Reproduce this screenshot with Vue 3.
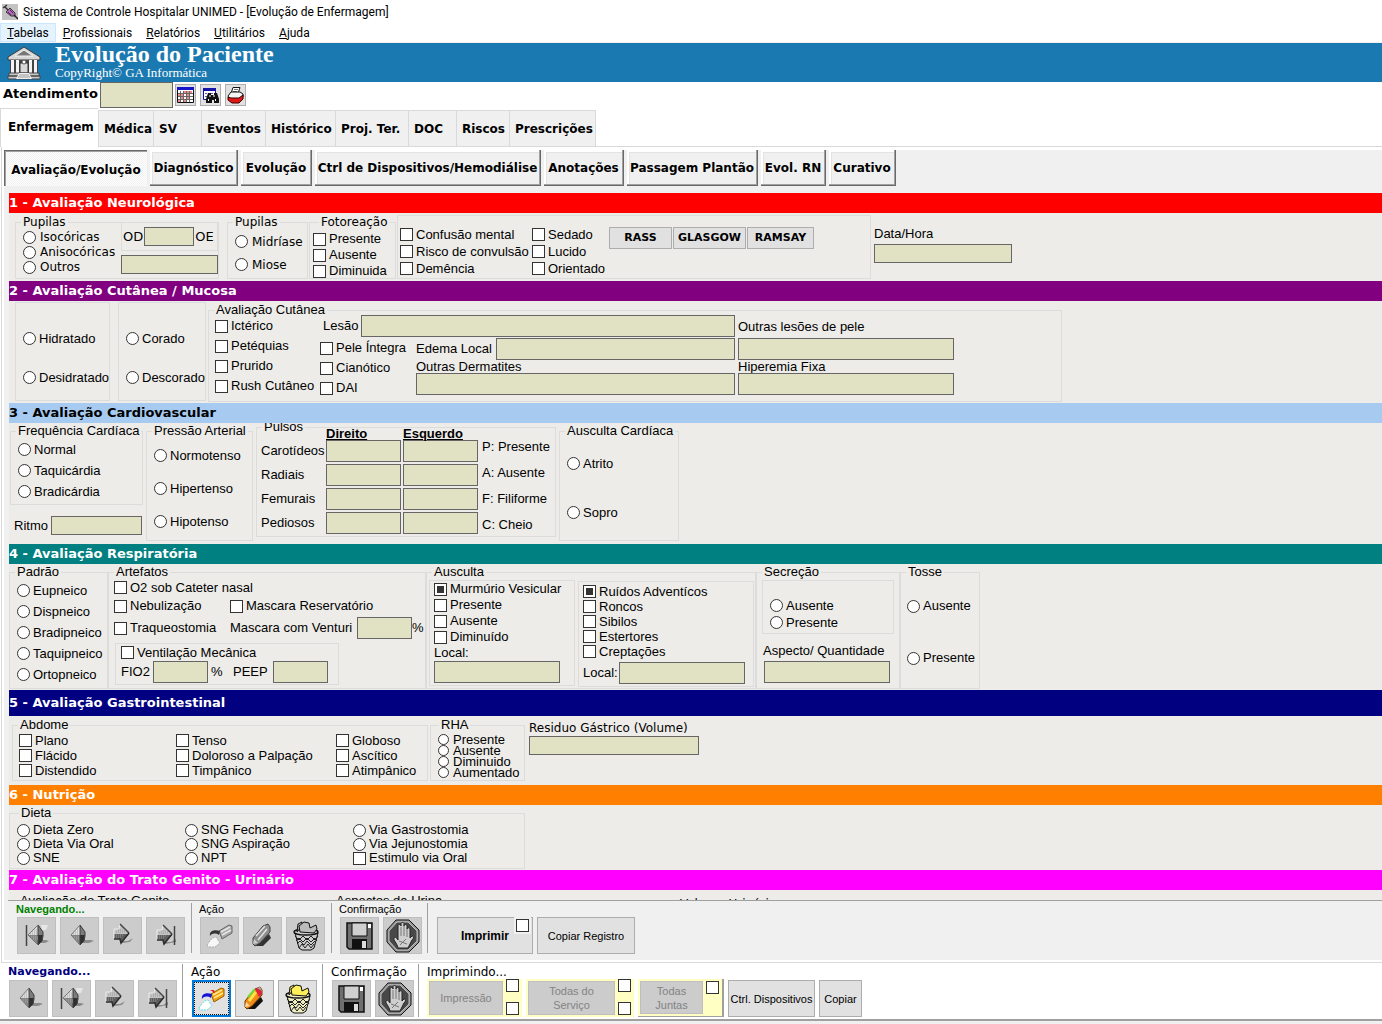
<script setup>
const menus = [
  { key: 'T', rest: 'abelas', active: true },
  { key: 'P', rest: 'rofissionais' },
  { key: 'R', rest: 'elatórios' },
  { key: 'U', rest: 'tilitários' },
  { key: 'A', rest: 'juda' },
]
const tabs = [
  { name: 'Enfermagem', w: 98, on: true },
  { name: 'Médica', w: 55 },
  { name: 'SV', w: 48 },
  { name: 'Eventos', w: 64 },
  { name: 'Histórico', w: 70 },
  { name: 'Proj. Ter.', w: 73 },
  { name: 'DOC', w: 48 },
  { name: 'Riscos', w: 53 },
  { name: 'Prescrições', w: 87 },
]
const pages = [
  { name: 'Avaliação/Evolução', w: 143, on: true },
  { name: 'Diagnóstico', w: 88 },
  { name: 'Evolução', w: 71 },
  { name: 'Ctrl de Dispositivos/Hemodiálise', w: 226 },
  { name: 'Anotações', w: 80 },
  { name: 'Passagem Plantão', w: 131 },
  { name: 'Evol. RN', w: 65 },
  { name: 'Curativo', w: 67 },
]
const pulses = ['Carotídeos', 'Radiais', 'Femurais', 'Pediosos']
const pulseKeys = ['P: Presente', 'A: Ausente', 'F: Filiforme', 'C: Cheio']
const abdomen = [
  ['Plano', 'Flácido', 'Distendido'],
  ['Tenso', 'Doloroso a Palpação', 'Timpânico'],
  ['Globoso', 'Ascítico', 'Atimpânico'],
]
const diet = [
  [['Dieta Zero', 'radio'], ['Dieta Via Oral', 'radio'], ['SNE', 'radio']],
  [['SNG Fechada', 'radio'], ['SNG Aspiração', 'radio'], ['NPT', 'radio']],
  [['Via Gastrostomia', 'radio'], ['Via Jejunostomia', 'radio'], ['Estimulo via Oral', 'checkbox']],
]
</script>

<template>
  <div class="app">
    <svg class="defs" aria-hidden="true">
      <symbol id="i-prev" viewBox="0 0 39 37">
        <path d="M21 26h8l5-2-3-1h-7z" fill="#8b8b8b" />
        <path d="M11 18 20 8v10z" fill="#dcdcdc" /><path d="M11 18h9v10z" fill="#858585" />
        <path d="M20 8l5 7v3h-5z" fill="#7c7c7c" /><path d="M20 18h5l-1 6-4 4z" fill="#303030" />
        <path d="M20 8l5 7v4l-1 5-4 4z" fill="none" stroke="#3c3c3c" />
        <path d="M11 18 20 8M11 18l9 10" stroke="#777" />
        <path d="M13 17h7M15 15h5M17 13h3M14 20h6M16 22h4" stroke="#aaa" stroke-dasharray="1 1" />
      </symbol>
      <symbol id="i-first" viewBox="0 0 39 37">
        <path d="M9.500 8v21" stroke="#444" stroke-width="1.500" />
        <path d="M24 8h7l-2 5h-4z" fill="#e6e6e6" />
        <path d="M21 26h7l4-2-3-1h-6z" fill="#8b8b8b" />
        <path d="M11 18 21 8v10z" fill="#dcdcdc" /><path d="M11 18h10v10z" fill="#858585" />
        <path d="M21 8l5 7v3h-5z" fill="#7c7c7c" /><path d="M21 18h5l-1 6-4 4z" fill="#303030" />
        <path d="M21 8l5 7v4l-1 5-4 4z" fill="none" stroke="#3c3c3c" />
        <path d="M11 18 21 8M11 18l10 10" stroke="#777" />
        <path d="M13 17h8M15 15h6M17 13h4M14 20h7M16 22h5" stroke="#aaa" stroke-dasharray="1 1" />
      </symbol>
      <symbol id="i-next" viewBox="0 0 39 37">
        <path d="M18 24h7l5-3-3 4-8 1z" fill="#8b8b8b" />
        <path d="M11 12l6-1 1-4 9 9-10 1H11z" fill="#c3c3c3" />
        <path d="M11 17h15l-8 9-1-4-6-1z" fill="#5e5e5e" />
        <path d="M11 12v9M11 12h5M16 12l1-5" fill="none" stroke="#eee" />
        <path d="M17 7l9 9" stroke="#444" stroke-width="1.500" />
        <path d="M26 16 18 26l-1-4h-6" fill="none" stroke="#2c2c2c" stroke-width="1.500" />
        <path d="M13 15h11M15 13h7M13 18h8M13 20h6" stroke="#999" stroke-dasharray="1 1" />
      </symbol>
      <symbol id="i-last" viewBox="0 0 39 37">
        <path d="M18 25h7l5-3v3l-11 2z" fill="#8b8b8b" />
        <path d="M28.500 9v19" stroke="#444" stroke-width="1.500" />
        <path d="M11 13l6-1 1-4 9 9-10 1H11z" fill="#c3c3c3" />
        <path d="M11 18h15l-8 9-1-4-6-1z" fill="#5e5e5e" />
        <path d="M11 13v9M11 13h5M16 13l1-5" fill="none" stroke="#eee" />
        <path d="M17 8l9 9" stroke="#444" stroke-width="1.500" />
        <path d="M26 17 18 27l-1-4h-6" fill="none" stroke="#2c2c2c" stroke-width="1.500" />
        <path d="M13 16h11M15 14h7M13 19h8M13 21h6" stroke="#999" stroke-dasharray="1 1" />
      </symbol>
      <symbol id="i-pour-off" viewBox="0 0 39 37">
        <path d="M19 14 29 8l3 1v7l-10 6z" fill="#a9a9a9" stroke="#666" />
        <path d="M21 15 30 10M22 18l9-5" stroke="#e6e6e6" stroke-width="1.500" />
        <path d="M10 19c-1-5 4-7 10-5l-1 4c-3-2-7-2-9 1z" fill="#333" />
        <path d="M7 28c2-3 5-8 9-8l4 6-5 4H8z" fill="#f7f7f7" stroke="#aaa" stroke-dasharray="2 1" />
      </symbol>
      <symbol id="i-pour-on" viewBox="0 0 39 37">
        <path d="M19 14 29 8l3 1v7l-10 6z" fill="#f0a010" stroke="#9a6400" />
        <path d="M21 15 30 10M22 18l9-5" stroke="#ffe98a" stroke-width="1.500" />
        <path d="M18 10h4l1 3z" fill="#e02020" />
        <path d="M10 19c-1-5 4-7 10-5l-1 4c-3-2-7-2-9 1z" fill="#1414d8" />
        <path d="M7 28c2-3 5-8 9-8l4 6-5 4H8z" fill="#fff" stroke="#5adde8" stroke-dasharray="2 1" />
      </symbol>
      <symbol id="i-pencil-off" viewBox="0 0 39 37">
        <path d="M11 29h9l8-8-2-4z" fill="#333" />
        <path d="M10 27v-6l10-12 5-2 2 3v5L17 26l-5 3z" fill="#8e8e8e" stroke="#444" />
        <path d="M13 19l9-10M15 23l9-11" stroke="#e2e2e2" stroke-width="1.500" />
        <path d="M10 27l1-5 4 4z" fill="#ccc" />
      </symbol>
      <symbol id="i-pencil-on" viewBox="0 0 39 37">
        <path d="M11 29h9l8-8-2-4z" fill="#111" />
        <path d="M10 27v-6l10-12 5-2 2 3v5L17 26l-5 3z" fill="#f08a18" stroke="#6a3a00" />
        <path d="M13 17l7-8" stroke="#6fdc3a" stroke-width="2" />
        <path d="M14 21l7-9" stroke="#ffe04a" stroke-width="3" />
        <path d="M20 9l5-2 2 7-3 3z" fill="#e02040" /><path d="M22 8l3-1 2 4z" fill="#aaa" />
        <path d="M10 27l1-5 4 4z" fill="#ffd9a0" />
      </symbol>
      <symbol id="i-trash" viewBox="0 0 39 37">
        <path d="M9 16h23l-4 15-3 2h-9l-3-2z" fill="var(--bin)" stroke="#111" />
        <path d="M9 19l4 4 4-4 4 4 4-4 4 4 3-4M10 24l3-3 4 4 4-4 4 4 4-4 2 3M11 27l3-3 4 4 3-4 4 4 4-4M13 31l3-4 3 4 3-4 3 4 3-4" fill="none" stroke="#222" />
        <ellipse cx="20" cy="15" rx="12" ry="3" fill="var(--bin)" stroke="#111" stroke-width="1.500" />
        <path d="M11 15 12 7l4-2v4z" fill="var(--paper)" stroke="#111" />
        <path d="M14 15 13 9l5-4 5 1 1 5 6-3 1 4-3 4z" fill="var(--paper)" stroke="#111" />
      </symbol>
      <symbol id="i-disk" viewBox="0 0 39 37">
        <path d="M7 6h25v26H9l-2-2z" fill="#6f6f6f" stroke="#111" stroke-width="1.500" />
        <path d="M12 6h15v13H12z" fill="#d0d0d0" stroke="#111" />
        <path d="M28 7h3v4h-3z" fill="#fff" />
        <path d="M12 22h15v10H12z" fill="#111" /><path d="M22 24h4v7h-4z" fill="#ddd" />
      </symbol>
      <symbol id="i-stop" viewBox="0 0 39 37">
        <path d="M13 3h13l10 10v12L26 35H13L4 25V13z" fill="#9a9a9a" stroke="#111" />
        <path d="M14 5h11l9 9v10l-9 9H14l-8-9V14z" fill="#484848" stroke="#bbb" />
        <path d="M15 31c-1-5-5-8-4-10 2-2 3 1 4 2V9c0-2 3-2 3 0V7c0-2 3-2 3 0v2c0-2 3-2 3 0v3c1-2 3-1 3 0v9l2-2c2 0 2 2 0 4l-4 8z" fill="#cfcfcf" stroke="#222" />
        <path d="M18 10v9M21 9v10M24 12v8M16 24l8 3M17 28l6-6" stroke="#777" fill="none" />
      </symbol>
    </svg>

    <header class="titlebar">
      <svg width="16" height="16" viewBox="0 0 16 16" aria-hidden="true">
        <path d="M0 0h16v16H0z" fill="#c3c3c3" />
        <path d="M1 4 5 1M3 3l3 3" stroke="#333" stroke-width="1.500" />
        <path d="M4 8l4-4 5 5v3h-4z" fill="#a86bb0" stroke="#3b3b3b" />
        <path d="M6 8l3 3M8 6l3 3" stroke="#702080" /><path d="M12 11l4 4" stroke="#222" stroke-width="1.500" />
      </svg>
      <span>Sistema de Controle Hospitalar UNIMED - [Evolução de Enfermagem]</span>
    </header>

    <nav class="menubar">
      <a v-for="m in menus" :key="m.rest" href="#" :class="{ active: m.active }"><u>{{ m.key }}</u>{{ m.rest }}</a>
    </nav>

    <div class="banner">
      <svg width="34" height="34" viewBox="0 0 34 34" aria-hidden="true">
        <path d="M1 11 17 1l16 10v3H1z" fill="#d6d6d6" stroke="#3a3a3a" />
        <path d="M8 10 17 4l9 6z" fill="#777" stroke="#f4f4f4" />
        <path d="M3 14h28v13H3z" fill="#444" />
        <path d="M5.500 14v13M10.500 14v13M23.500 14v13M28.500 14v13" stroke="#f4f4f4" stroke-width="3" />
        <path d="M13 27V17h8v10z" fill="#d8d8d8" stroke="#333" /><circle cx="17" cy="16" r="2" fill="#fff" stroke="#555" />
        <path d="M2 27h30v3H2zM1 30h32v3H1z" fill="#c9c9c9" stroke="#444" />
        <path d="M12 27h10l3 6H9z" fill="#eee" /><path d="M12 29h10M11 31h12" stroke="#999" />
      </svg>
      <div>
        <h1>Evolução do Paciente</h1>
        <p>CopyRight© GA Informática</p>
      </div>
    </div>

    <div class="lookup">
      <label for="atendimento">Atendimento</label>
      <input id="atendimento" class="f" type="text" />
      <button aria-label="Calendário">
        <svg width="17" height="17" viewBox="0 0 17 17">
          <path d="M.5.5h16v15H.5z" fill="#fff" stroke="#111" /><path d="M0 0h17v3H0z" fill="#1414c8" />
          <path d="M1 6.500h15M1 9.500h15M1 12.500h15M3.500 4v11M6.500 4v11M9.500 4v11M12.500 4v11" stroke="#666" />
          <path d="M7 5h2M10 5h2M13 5h2M1 8h2M4 8h2M10 8h2M4 11h2M10 11h2M1 14h2M7 14h2" stroke="#e01818" />
        </svg>
      </button>
      <button aria-label="Localizar">
        <svg width="17" height="17" viewBox="0 0 17 17">
          <path d="M1.500 1.500h12v11h-12z" fill="#fff" stroke="#1414a8" /><path d="M1 1h13v3H1z" fill="#1414a8" />
          <path d="M3 6.500h8M3 9.500h4" stroke="#5a5ab8" stroke-dasharray="2 1" />
          <path d="M6 6h3v2h3V6h3l2 6v4h-5v-3h-2v3H4v-4z" fill="#111" /><path d="M6.500 12v2M13.500 12v2M8 8v2M12 8v2" stroke="#fff" />
        </svg>
      </button>
      <button aria-label="Imprimir ficha">
        <svg width="17" height="17" viewBox="0 0 17 17">
          <path d="M6 .5h7l-2 6H4z" fill="#fff" stroke="#111" /><path d="M7 2.500h4M6 4.500h4" stroke="#777" />
          <path d="M1 9l3-4h9l3 2v3l-4 3H3z" fill="#f4f4f4" stroke="#111" />
          <path d="M1 10l3 1h8l4-3v4l-4 4H5l-4-3z" fill="#e01818" stroke="#3a0000" />
        </svg>
      </button>
    </div>

    <div class="tabs" role="tablist">
      <button v-for="t in tabs" :key="t.name" role="tab" :class="{ on: t.on }" :style="{ width: t.w + 'px' }">{{ t.name }}</button>
    </div>

    <main class="frame">
      <div class="pages">
        <button v-for="p in pages" :key="p.name" :class="{ on: p.on }" :style="{ width: p.w + 'px' }">{{ p.name }}</button>
      </div>

      <div class="form">
        <h2 class="neuro">1 - Avaliação Neurológica</h2>
        <section class="body s1">
          <fieldset class="pupils">
            <legend>Pupilas</legend>
            <div class="row">
              <div class="opts r15 wide">
                <label v-for="o in ['Isocóricas', 'Anisocóricas', 'Outros']" :key="o"><input type="radio" name="pup" />{{ o }}</label>
              </div>
              <div class="eyes">
                <div class="eyebox"><label for="od">OD</label><input id="od" class="f" /><label for="od">OE</label></div>
                <input class="f" aria-label="Outros" />
              </div>
            </div>
          </fieldset>
          <fieldset class="pupil2">
            <legend>Pupilas</legend>
            <div class="opts r23 wide">
              <label v-for="o in ['Midríase', 'Miose']" :key="o"><input type="radio" name="pup2" />{{ o }}</label>
            </div>
          </fieldset>
          <fieldset class="photo">
            <legend>Fotoreação</legend>
            <div class="opts r16">
              <label v-for="o in ['Presente', 'Ausente', 'Diminuida']" :key="o"><input type="checkbox" />{{ o }}</label>
            </div>
          </fieldset>
          <fieldset class="mental">
            <div class="opts r17">
              <label v-for="o in ['Confusão mental', 'Risco de convulsão', 'Demência']" :key="o"><input type="checkbox" />{{ o }}</label>
            </div>
            <div class="opts r17">
              <label v-for="o in ['Sedado', 'Lucido', 'Orientado']" :key="o"><input type="checkbox" />{{ o }}</label>
            </div>
            <div class="scales"><button>RASS</button><button>GLASGOW</button><button>RAMSAY</button></div>
          </fieldset>
          <div class="date">
            <label for="data">Data/Hora</label>
            <input id="data" class="f" />
          </div>
        </section>

        <h2 class="skin">2 - Avaliação Cutânea / Mucosa</h2>
        <section class="body s2">
          <fieldset class="pair p1">
            <div class="opts r39">
              <label v-for="o in ['Hidratado', 'Desidratado']" :key="o"><input type="radio" name="hid" />{{ o }}</label>
            </div>
          </fieldset>
          <fieldset class="pair p2">
            <div class="opts r39">
              <label v-for="o in ['Corado', 'Descorado']" :key="o"><input type="radio" name="cor" />{{ o }}</label>
            </div>
          </fieldset>
          <fieldset class="cutaneous">
            <legend>Avaliação Cutânea</legend>
            <div class="row up">
              <div class="opts r20 c1">
                <label v-for="o in ['Ictérico', 'Petéquias', 'Prurido', 'Rush Cutâneo']" :key="o"><input type="checkbox" />{{ o }}</label>
              </div>
              <div class="c2">
                <div class="line lesion"><label for="lesao">Lesão</label><input id="lesao" class="f grow" /></div>
                <div class="row">
                  <div class="opts r20 c3">
                    <label v-for="o in ['Pele Íntegra', 'Cianótico', 'DAI']" :key="o"><input type="checkbox" />{{ o }}</label>
                  </div>
                  <div class="stack grow">
                    <div class="line"><label for="edema">Edema Local</label><input id="edema" class="f grow" /></div>
                    <label class="cap" for="derm">Outras Dermatites</label>
                    <input id="derm" class="f" />
                  </div>
                </div>
              </div>
              <div class="stack c4">
                <label class="cap first" for="pele">Outras lesões de pele</label>
                <input id="pele" class="f" />
                <label class="cap" for="hiper">Hiperemia Fixa</label>
                <input id="hiper" class="f" />
              </div>
            </div>
          </fieldset>
        </section>

        <h2 class="cardio">3 - Avaliação Cardiovascular</h2>
        <section class="body s3">
          <div class="freq">
            <fieldset>
              <legend>Frequência Cardíaca</legend>
              <div class="opts r21">
                <label v-for="o in ['Normal', 'Taquicárdia', 'Bradicárdia']" :key="o"><input type="radio" name="freq" />{{ o }}</label>
              </div>
            </fieldset>
            <div class="rhythm"><label for="ritmo">Ritmo</label><input id="ritmo" class="f grow" /></div>
          </div>
          <fieldset class="pressure">
            <legend>Pressão Arterial</legend>
            <div class="opts r33">
              <label v-for="o in ['Normotenso', 'Hipertenso', 'Hipotenso']" :key="o"><input type="radio" name="pa" />{{ o }}</label>
            </div>
          </fieldset>
          <fieldset class="pulse">
            <legend>Pulsos</legend>
            <div class="row">
              <table>
                <thead><tr><th></th><th>Direito</th><th>Esquerdo</th></tr></thead>
                <tbody>
                  <tr v-for="p in pulses" :key="p">
                    <th scope="row">{{ p }}</th>
                    <td><input class="f" :aria-label="p + ' direito'" /></td>
                    <td><input class="f" :aria-label="p + ' esquerdo'" /></td>
                  </tr>
                </tbody>
              </table>
              <ul><li v-for="k in pulseKeys" :key="k">{{ k }}</li></ul>
            </div>
          </fieldset>
          <fieldset class="heart">
            <legend>Ausculta Cardíaca</legend>
            <div class="opts r49">
              <label v-for="o in ['Atrito', 'Sopro']" :key="o"><input type="radio" name="ausc" />{{ o }}</label>
            </div>
          </fieldset>
        </section>

        <h2 class="resp">4 - Avaliação Respiratória</h2>
        <section class="body s4">
          <fieldset class="pattern">
            <legend>Padrão</legend>
            <div class="opts r21">
              <label v-for="o in ['Eupneico', 'Dispneico', 'Bradipneico', 'Taquipneico', 'Ortopneico']" :key="o"><input type="radio" name="pad" />{{ o }}</label>
            </div>
          </fieldset>
          <fieldset class="artefacts">
            <legend>Artefatos</legend>
            <div class="opts r15"><label><input type="checkbox" />O2 sob Cateter nasal</label></div>
            <div class="two opts r22">
              <label><input type="checkbox" />Nebulização</label>
              <label><input type="checkbox" />Mascara Reservatório</label>
              <label><input type="checkbox" />Traqueostomia</label>
              <div class="line venturi"><label for="venturi">Mascara com Venturi</label><input id="venturi" class="f w55" /><span>%</span></div>
            </div>
            <div class="vent">
              <div class="opts r17"><label><input type="checkbox" />Ventilação Mecânica</label></div>
              <div class="line">
                <label class="fio" for="fio2">FIO2</label><input id="fio2" class="f w55" /><span class="pct">%</span>
                <label class="peep" for="peep">PEEP</label><input id="peep" class="f w55" />
              </div>
            </div>
          </fieldset>
          <fieldset class="auscult">
            <legend>Ausculta</legend>
            <div class="row">
              <div class="inner murmur">
                <div class="opts r16">
                  <label v-for="(o, i) in ['Murmúrio Vesicular', 'Presente', 'Ausente', 'Diminuído']" :key="o"><input type="checkbox" :checked="i === 0" />{{ o }}</label>
                </div>
                <label class="local" for="local1">Local:</label>
                <input id="local1" class="f w126" />
              </div>
              <div class="inner noise">
                <div class="opts r15">
                  <label v-for="(o, i) in ['Ruídos Adventícos', 'Roncos', 'Sibilos', 'Estertores', 'Creptações']" :key="o"><input type="checkbox" :checked="i === 0" />{{ o }}</label>
                </div>
                <div class="line"><label for="local2">Local:</label><input id="local2" class="f w126" /></div>
              </div>
            </div>
          </fieldset>
          <fieldset class="secretion">
            <legend>Secreção</legend>
            <div class="inner">
              <div class="opts r17">
                <label v-for="o in ['Ausente', 'Presente']" :key="o"><input type="radio" name="sec" />{{ o }}</label>
              </div>
            </div>
            <label class="aspect" for="aspecto">Aspecto/ Quantidade</label>
            <input id="aspecto" class="f w126" />
          </fieldset>
          <fieldset class="cough">
            <legend>Tosse</legend>
            <div class="opts r52">
              <label v-for="o in ['Ausente', 'Presente']" :key="o"><input type="radio" name="tosse" />{{ o }}</label>
            </div>
          </fieldset>
        </section>

        <h2 class="gastro">5 - Avaliação Gastrointestinal</h2>
        <section class="body s5">
          <fieldset class="abdomen">
            <legend>Abdome</legend>
            <div class="row">
              <div v-for="(c, i) in abdomen" :key="i" class="opts r15">
                <label v-for="o in c" :key="o"><input type="checkbox" />{{ o }}</label>
              </div>
            </div>
          </fieldset>
          <fieldset class="rha">
            <legend>RHA</legend>
            <div class="opts r11">
              <label v-for="o in ['Presente', 'Ausente', 'Diminuido', 'Aumentado']" :key="o"><input type="radio" name="rha" />{{ o }}</label>
            </div>
          </fieldset>
          <div class="residue">
            <label for="residuo">Residuo Gástrico (Volume)</label>
            <input id="residuo" class="f" />
          </div>
        </section>

        <h2 class="nutri">6 - Nutrição</h2>
        <section class="body s6">
          <fieldset class="diet">
            <legend>Dieta</legend>
            <div class="row">
              <div v-for="(c, i) in diet" :key="i" class="opts r14">
                <label v-for="o in c" :key="o[0]"><input :type="o[1]" name="dieta" />{{ o[0] }}</label>
              </div>
            </div>
          </fieldset>
        </section>

        <h2 class="urin">7 - Avaliação do Trato Genito - Urinário</h2>
        <section class="body s7">
          <span>Avaliação do Trato Genito</span>
          <span>Aspectos da Urina</span>
          <span class="vol">Volume Urinário</span>
        </section>
      </div>

      <div class="bar inner-bar">
        <div class="set">
          <b class="nav">Navegando...</b>
          <div class="btns">
            <button v-for="i in ['first', 'prev', 'next', 'last']" :key="i" class="ib" disabled :aria-label="i"><svg><use :href="'#i-' + i" /></svg></button>
          </div>
        </div>
        <div class="set act">
          <span>Ação</span>
          <div class="btns">
            <button v-for="i in ['pour-off', 'pencil-off', 'trash']" :key="i" class="ib" disabled :aria-label="i"><svg><use :href="'#i-' + i" /></svg></button>
          </div>
        </div>
        <div class="set conf">
          <span>Confirmação</span>
          <div class="btns">
            <button v-for="i in ['disk', 'stop']" :key="i" class="ib" disabled :aria-label="i"><svg><use :href="'#i-' + i" /></svg></button>
          </div>
        </div>
        <div class="set last">
          <div class="btns">
            <div class="print">
              <button class="tb bold">Imprimir</button>
              <input type="checkbox" aria-label="Imprimir selecionado" />
            </div>
            <button class="tb copyreg">Copiar Registro</button>
          </div>
        </div>
      </div>
    </main>

    <footer class="bar outer-bar">
      <div class="set">
        <b class="nav">Navegando...</b>
        <div class="btns">
          <button v-for="i in ['prev', 'first', 'next', 'last']" :key="i" class="ib" disabled :aria-label="i"><svg><use :href="'#i-' + i" /></svg></button>
        </div>
      </div>
      <div class="set act">
        <span>Ação</span>
        <div class="btns">
          <button class="ib live focus" aria-label="Novo"><svg><use href="#i-pour-on" /></svg></button>
          <button class="ib live" aria-label="Editar"><svg><use href="#i-pencil-on" /></svg></button>
          <button class="ib live yellow" aria-label="Excluir"><svg><use href="#i-trash" /></svg></button>
        </div>
      </div>
      <div class="set conf">
        <span>Confirmação</span>
        <div class="btns">
          <button v-for="i in ['disk', 'stop']" :key="i" class="ib" disabled :aria-label="i"><svg><use :href="'#i-' + i" /></svg></button>
        </div>
      </div>
      <div class="set prints">
        <span>Imprimindo...</span>
        <div class="btns">
          <div class="yp y1">
            <button disabled>Impressão</button>
            <div class="ticks"><input type="checkbox" aria-label="Impressão 1" /><input type="checkbox" aria-label="Impressão 2" /></div>
          </div>
          <div class="yp y2">
            <button disabled>Todas do Serviço</button>
            <div class="ticks"><input type="checkbox" aria-label="Serviço 1" /><input type="checkbox" aria-label="Serviço 2" /></div>
          </div>
          <div class="yp y3">
            <button disabled>Todas Juntas</button>
            <div class="ticks"><input type="checkbox" aria-label="Juntas" /></div>
          </div>
          <button class="tb ctrl">Ctrl. Dispositivos</button>
          <button class="tb copy">Copiar</button>
        </div>
      </div>
    </footer>
    <div class="status"></div>
  </div>
</template>

<style>
body {
  margin: 0;
  background: #fff;
}
</style>

<style scoped>
* {
  box-sizing: border-box;
}
.app {
  display: flex;
  flex-direction: column;
  height: 100vh;
  overflow: hidden;
  background: #fff;
  color: #000;
  font: 13px/16px "Liberation Sans", Arial, sans-serif;
}
.defs {
  display: none;
}
button,
input {
  font: inherit;
  color: inherit;
  margin: 0;
  padding: 0;
  border-radius: 0;
}
input {
  min-width: 0;
}
.f {
  display: block;
  height: 22px;
  border: 1px solid #666;
  background: #e1e2c4;
}
.row {
  display: flex;
  align-items: flex-start;
}
.line {
  display: flex;
  align-items: center;
  height: 22px;
  white-space: nowrap;
}
.stack {
  display: flex;
  flex-direction: column;
}
.grow {
  flex: 1;
}
.w55 {
  width: 55px;
}
.w126 {
  width: 126px;
}

.titlebar {
  flex: none;
  display: flex;
  align-items: center;
  gap: 5px;
  height: 23px;
  padding-left: 2px;
  font: 12px/16px Roboto, "Noto Sans", sans-serif;
}
.menubar {
  flex: none;
  display: flex;
  height: 20px;
  border-bottom: 1px solid #f0f0f0;
  font: 12px/20px Roboto, "Noto Sans", sans-serif;
}
.menubar a {
  padding: 0 7px;
  color: #000;
  text-decoration: none;
}
.menubar a.active {
  padding: 0 6px;
  border: 1px solid #cce8ff;
  background: #e5f3ff;
  line-height: 18px;
}
.banner {
  flex: none;
  display: flex;
  height: 39px;
  padding: 3px 0 0 7px;
  gap: 14px;
  background: #1b79b1;
  color: #fff;
  font-family: "Liberation Serif", "Times New Roman", serif;
}
.banner h1 {
  margin: -4px 0 0;
  font-size: 24px;
  line-height: 24px;
}
.banner p {
  margin: 0;
  font-size: 13px;
  line-height: 14px;
}
.lookup {
  flex: none;
  display: flex;
  height: 26px;
  padding-left: 3px;
}
.lookup label {
  width: 97px;
  font: bold 13px/24px "DejaVu Sans", Verdana, sans-serif;
}
.lookup .f {
  width: 73px;
  height: 26px;
  margin-right: 2px;
}
.lookup button {
  display: flex;
  align-items: center;
  justify-content: center;
  width: 21px;
  height: 22px;
  margin: 2px 4px 0 0;
  border: 1px solid #adadad;
  background: #e1e1e1;
}
.lookup svg {
  flex: none;
}

.tabs {
  flex: none;
  display: flex;
  align-items: flex-end;
  height: 39px;
  border-bottom: 1px solid #d9d9d9;
}
.tabs button {
  height: 36px;
  padding: 0 0 0 5px;
  border: solid #d9d9d9;
  border-width: 1px 0 0 1px;
  background: #f0f0f0;
  text-align: left;
  font: bold 12px/16px "DejaVu Sans", Verdana, sans-serif;
  white-space: nowrap;
}
.tabs button:last-child {
  border-right-width: 1px;
}
.tabs button.on {
  height: 39px;
  margin-bottom: -1px;
  padding: 0 0 2px 7px;
  background: #fff;
}

.frame {
  flex: 1;
  min-height: 0;
  display: flex;
  flex-direction: column;
  margin-left: 1px;
  padding: 3px 0 2px 2px;
  border-left: 1px solid #d9d9d9;
  border-bottom: 1px solid #d9d9d9;
}
.pages {
  flex: none;
  display: flex;
  gap: 3px;
  height: 43px;
  padding: 0 0 7px;
  background: #f0f0f0;
}
.pages button {
  flex: none;
  border: solid #696969;
  border-width: 0 1px 1px 0;
  background: #f0f0f0;
  box-shadow: inset -1px -1px #a0a0a0, inset 2px 2px #fff, inset 3px 3px #e3e3e3;
  font: bold 12px/16px "DejaVu Sans", Verdana, sans-serif;
  white-space: nowrap;
}
.pages button.on {
  padding-top: 2px;
  border: solid #696969;
  border-width: 1px 0 0 1px;
  background: repeating-conic-gradient(#fff 0 25%, #f0f0f0 0 50%) 0 0 / 2px 2px;
  box-shadow: inset 1px 1px #a0a0a0;
}

.form {
  flex: 1;
  min-height: 0;
  overflow: hidden;
  padding-left: 5px;
  background: #edece8;
  box-shadow: inset 5px 0 #f0f0f0;
}
h2 {
  height: 20px;
  margin: 0;
  color: #fff;
  font: bold 13px/20px "DejaVu Sans", Verdana, sans-serif;
}
.neuro { background: #f00; }
.skin { background: #800080; }
.cardio { background: #a6caf0; color: #000; }
.resp { background: #008080; }
.gastro { height: 26px; line-height: 26px; background: #000080; }
.nutri { background: #ff8000; }
.urin { background: #f0f; }

.body {
  display: flex;
  align-items: flex-start;
  overflow: hidden;
}
fieldset {
  flex: none;
  min-width: 0;
  margin: 0;
  padding: 0;
  border: 1px solid #dcdcdc;
}
legend {
  margin-left: 5px;
  padding: 0 2px;
  line-height: 16px;
}
.opts {
  flex: none;
  padding-left: 7px;
}
.opts label {
  display: flex;
  align-items: center;
  gap: 3px;
  white-space: nowrap;
}
.r11 label { height: 11px; line-height: 11px; }
.r14 label { height: 14px; line-height: 14px; }
.r15 label { height: 15px; line-height: 15px; }
.r16 label { height: 16px; }
.r17 label { height: 17px; }
.r20 label { height: 20px; }
.r21 label { height: 21px; }
.r22 label { height: 22px; }
.r23 label { height: 23px; }
.r33 label { height: 33px; }
.r39 label { height: 39px; }
.r49 label { height: 49px; }
.r52 label { height: 52px; }
input[type="checkbox"],
input[type="radio"] {
  appearance: none;
  flex: none;
  width: 13px;
  height: 13px;
  border: 1px solid #333;
  background: #fff;
}
input[type="radio"] {
  border-radius: 50%;
}
input[type="checkbox"]:checked {
  box-shadow: inset 0 0 0 2px #fff;
  background: #333;
}

.s1 {
  padding: 1px 0 2px 6px;
}
.s1 fieldset {
  height: 65px;
}
.s1 legend,
.wide {
  font: 12px/16px "DejaVu Sans", Verdana, sans-serif;
}
.wide label {
  gap: 4px;
}
.pupils {
  width: 204px;
}
.pupils .opts {
  width: 105px;
}
.eyes {
  flex: 1;
  margin-top: -8px;
}
.eyebox {
  display: flex;
  align-items: center;
  gap: 1px;
  height: 29px;
  margin-bottom: 4px;
  padding-left: 1px;
  border: 1px solid #dcdcdc;
  font: 13px/16px "DejaVu Sans", Verdana, sans-serif;
}
.eyes .f {
  width: 97px;
  height: 19px;
}
.eyebox .f {
  width: 50px;
}
.pupil2 {
  width: 81px;
  margin-left: 8px;
}
.photo {
  width: 87px;
  margin-left: 1px;
}
.photo .opts {
  padding: 1px 0 0 3px;
}
.photo legend {
  margin-left: 9px;
}
.s1 .mental {
  display: flex;
  align-items: flex-start;
  width: 474px;
  height: 64px;
  margin: 1px 0 0 1px;
  padding: 10px 0 0 2px;
}
.mental .opts {
  width: 132px;
  padding: 0;
}
.mental .opts + .opts {
  width: 77px;
}
.scales {
  display: flex;
  gap: 1px;
  padding-top: 1px;
}
.scales button {
  width: 63px;
  height: 22px;
  border: 1px solid #adadad;
  background: #e1e1e1;
  font: bold 11px/16px "DejaVu Sans", Tahoma, sans-serif;
}
.scales button:nth-child(2) { width: 73px; }
.scales button:nth-child(3) { width: 67px; }
.date {
  padding: 12px 0 0 3px;
}
.date .f {
  width: 138px;
  height: 19px;
  margin-top: 2px;
}

.s2 {
  padding: 1px 0 1px 6px;
}
.pair {
  width: 95px;
  height: 99px;
  padding-top: 16px;
}
.p2 {
  width: 88px;
  margin-left: 8px;
}
.cutaneous {
  width: 854px;
  height: 100px;
  margin-left: 2px;
}
.up {
  margin-top: -3px;
}
.c1 {
  width: 111px;
  padding: 1px 0 0 6px;
}
.c2 {
  width: 415px;
}
.lesion {
  gap: 3px;
  padding-left: 3px;
  margin-bottom: 1px;
}
.c3 {
  width: 96px;
  padding: 0;
}
.c2 .stack .line {
  gap: 4px;
}
.cap {
  line-height: 13px;
}
.cap.first {
  line-height: 23px;
}
.c4 {
  width: 216px;
  margin-left: 3px;
}

.s3 {
  padding: 0 0 3px 1px;
}
.freq {
  width: 133px;
}
.freq fieldset {
  height: 82px;
}
.rhythm {
  display: flex;
  align-items: center;
  gap: 3px;
  margin-top: 11px;
  padding: 0 1px 0 4px;
}
.rhythm .f {
  height: 19px;
}
.pressure {
  width: 107px;
  height: 118px;
  margin-left: 3px;
}
.pulse {
  width: 300px;
  height: 118px;
  margin: -4px 0 0 3px;
}
.pulse table {
  margin: -7px 0 0 4px;
  border-collapse: collapse;
}
.pulse th,
.pulse td {
  height: 24px;
  padding: 0;
  vertical-align: top;
  text-align: left;
  line-height: 22px;
  font-weight: normal;
}
.pulse thead th {
  height: 12px;
  line-height: 12px;
  font-weight: bold;
  text-decoration: underline;
}
.pulse tbody th {
  width: 65px;
}
.pulse td {
  width: 77px;
}
.pulse .f {
  width: 75px;
}
.pulse ul {
  margin: -1px 0 0;
  padding: 0 0 0 2px;
  list-style: none;
  line-height: 26px;
}
.heart {
  width: 120px;
  height: 118px;
  margin-left: 3px;
}

.s4 {
  padding-bottom: 1px;
}
.s4 fieldset {
  height: 125px;
}
.pattern {
  width: 99px;
}
.artefacts {
  width: 318px;
}
.artefacts > .opts {
  padding-left: 5px;
}
.two {
  display: grid;
  grid-template-columns: 116px 1fr;
}
.venturi .f {
  margin-left: 5px;
}
.vent {
  width: 224px;
  height: 42px;
  margin: 4px 0 0 6px;
  padding-left: 5px;
  border: 1px solid #dcdcdc;
}
.vent .opts {
  padding: 0;
}
.fio {
  width: 32px;
}
.pct {
  width: 25px;
  padding-left: 3px;
}
.peep {
  width: 40px;
}
.auscult {
  width: 330px;
}
.inner {
  border: 1px solid #dcdcdc;
  padding-left: 4px;
}
.inner .opts {
  padding: 0;
}
.murmur {
  width: 146px;
  height: 106px;
  margin-left: 2px;
}
.local {
  display: block;
}
.noise {
  width: 176px;
  height: 106px;
  margin: 1px 0 0 3px;
  padding-top: 2px;
}
.noise .line {
  gap: 1px;
  margin-top: 3px;
}
.secretion {
  width: 144px;
}
.secretion .inner {
  width: 132px;
  height: 54px;
  margin-left: 5px;
  padding: 16px 0 0 7px;
}
.aspect {
  display: block;
  margin: 9px 0 2px 6px;
}
.secretion .f {
  margin-left: 7px;
}
.cough {
  width: 80px;
}
.cough .opts {
  padding-left: 6px;
}

.s5 {
  padding: 1px 0 4px 3px;
}
.s5 fieldset {
  height: 64px;
}
.abdomen {
  width: 416px;
}
.abdomen .opts {
  width: 157px;
  padding-left: 6px;
}
.abdomen .opts:nth-child(2) {
  width: 160px;
}
.abdomen .opts:nth-child(3) {
  width: 97px;
}
.rha {
  width: 95px;
  margin-left: 2px;
}
.rha legend {
  margin-left: 8px;
}
.rha .opts {
  padding-top: 1px;
}
.rha input[type="radio"] {
  width: 11px;
  height: 11px;
  margin-right: 1px;
}
.residue {
  padding: 4px 0 0 4px;
  font: 12px/15px "DejaVu Sans", Verdana, sans-serif;
}
.residue label {
  display: block;
}
.residue .f {
  width: 170px;
  height: 19px;
}

.s6 {
  padding-bottom: 1px;
}
.diet {
  width: 516px;
  height: 64px;
}
.diet legend {
  margin-left: 9px;
}
.diet .row {
  padding-top: 2px;
}
.diet .opts {
  width: 168px;
}

.s7 {
  padding: 3px 0 20px 11px;
}
.s7 span {
  width: 316px;
}
.s7 span + span {
  width: 344px;
}
.s7 .vol {
  padding-top: 3px;
  font: 12px/16px "DejaVu Sans", Verdana, sans-serif;
}

.bar {
  flex: none;
  display: flex;
  font: 12px/16px "DejaVu Sans", Verdana, sans-serif;
}
.set {
  padding: 0 4px 0 8px;
  border-left: 1px solid #a0a0a0;
}
.set:first-child {
  border-left: 0;
}
.set > span,
.nav {
  display: block;
  height: 16px;
}
.btns {
  display: flex;
  gap: 4px;
  margin-left: 1px;
}
.inner-bar {
  height: 60px;
  margin-left: 4px;
  padding: 2px 0 7px;
  border-top: 1px solid #a0a0a0;
  background: #f0f0f0;
  box-shadow: -4px 0 #f0f0f0;
  font: 11px/12px "Liberation Sans", Arial, sans-serif;
}
.inner-bar .nav {
  color: #008000;
}
.inner-bar .set {
  padding-left: 7px;
}
.inner-bar .set > span,
.inner-bar .nav {
  height: 14px;
}
.inner-bar .set:first-child {
  width: 183px;
  padding-left: 8px;
}
.inner-bar .set.last {
  padding: 14px 0 0 8px;
}
.inner-bar .act,
.outer-bar .act {
  width: 140px;
}
.inner-bar .conf,
.outer-bar .conf {
  width: 96px;
}
.outer-bar {
  height: 56px;
  padding: 1px 0 2px;
}
.outer-bar .nav {
  color: #000080;
  font-size: 11px;
}
.outer-bar .set:first-child {
  width: 182px;
  padding-left: 8px;
}
.ib {
  width: 39px;
  height: 37px;
  border: 1px solid #bfbfbf;
  background: #ccc;
  --paper: #bbb;
  --bin: #ccc;
}
.ib svg {
  display: block;
  width: 39px;
  height: 37px;
  margin: -1px;
}
.ib.live {
  border-color: #adadad;
  background: #e1e1e1;
}
.ib.focus {
  border: 2px solid #0078d7;
  outline: 1px dotted #111;
  outline-offset: -3px;
}
.ib.focus svg {
  margin: -2px;
}
.ib.yellow {
  --paper: #fff05a;
  --bin: #efedc0;
}
.tb {
  height: 37px;
  border: 1px solid #adadad;
  background: #e1e1e1;
  font: 11px/14px "Liberation Sans", Arial, sans-serif;
  white-space: nowrap;
}
.print {
  position: relative;
}
.print .tb {
  width: 96px;
}
.print input {
  position: absolute;
  top: 2px;
  right: 4px;
  box-shadow: 0 0 0 2px #f0f0f0;
}
.tb.bold {
  font-size: 12px;
  font-weight: bold;
}
.copyreg {
  width: 98px;
}
.ctrl {
  width: 87px;
}
.copy {
  width: 43px;
}
.yp {
  display: flex;
  gap: 3px;
  width: 95px;
  height: 38px;
  margin-top: -1px;
  padding: 2px;
  background: #ffffc4;
}
.yp button {
  flex: 1;
  padding: 0 14px;
  border: 1px solid #bfbfbf;
  background: #ccc;
  color: #838383;
  font: 11px/14px "Liberation Sans", Arial, sans-serif;
}
.y1 button {
  padding: 0;
}
.y2 {
  width: 108px;
}
.y3 {
  width: 86px;
  border: solid #a0a0a0;
  border-width: 0 2px 1px 0;
}
.y1 .ticks,
.y2 .ticks {
  margin-top: -2px;
}
.ticks {
  display: flex;
  flex-direction: column;
  justify-content: space-between;
  width: 14px;
}
.prints .btns {
  margin-left: 0;
}
.status {
  flex: none;
  height: 5px;
  border-top: 2px solid #a0a0a0;
  background: #f0f0f0;
}
</style>
